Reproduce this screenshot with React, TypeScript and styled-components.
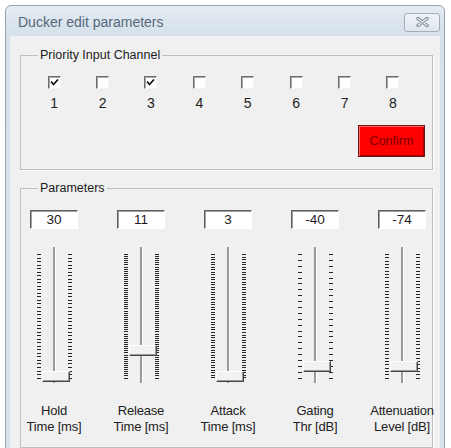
import React from 'react';
import styled, { createGlobalStyle } from 'styled-components';

const GlobalStyle = createGlobalStyle`
  body {
    margin: 0;
    background: #ffffff;
    font-family: "Liberation Sans", Arial, sans-serif;
  }
`;

const Window = styled.div`
  margin: 5px 0 0 5px;
  width: 440px;
  height: 460px;
  box-sizing: border-box;
  border: 1px solid #98a4b0;
  border-radius: 6px 6px 0 0;
  background: linear-gradient(#e4ebf3, #d5e0ea 30px, #d9e3ec);
  padding: 0 4px;
  display: flex;
  flex-direction: column;
`;

const TitleBar = styled.div`
  height: 30px;
  display: flex;
  align-items: center;
  justify-content: space-between;
  padding: 2px 0 0 8px;
  box-sizing: border-box;
`;

const Title = styled.span`
  font-size: 14px;
  color: #56677a;
`;

const CloseButton = styled.div`
  width: 36px;
  height: 19px;
  box-sizing: border-box;
  border: 1px solid #a3aeb9;
  border-radius: 3px;
  background: linear-gradient(#eff3f7, #dfe6ee);
  display: flex;
  align-items: center;
  justify-content: center;
`;

const Client = styled.div`
  flex: 1;
  background: #f0f0f0;
  padding: 12px 7px 0 10px;
`;

const Group = styled.fieldset<{ $top?: number }>`
  margin: ${(p) => p.$top ?? 0}px 0 0 0;
  padding: 0 7px 12px 9px;
  border: 1px solid #bcc0c4;
  box-shadow: 1px 1px 0 #ffffff;
  min-width: 0;
`;

const Legend = styled.legend`
  font-size: 12.5px;
  line-height: 14px;
  color: #1c1c1c;
  padding: 0 2px;
  margin-left: 8px;
`;

const ChannelRow = styled.div`
  display: grid;
  grid-template-columns: repeat(8, 48.4px);
  margin-top: 14px;
`;

const Channel = styled.div`
  display: flex;
  flex-direction: column;
  align-items: center;
`;

const CheckBox = styled.span`
  width: 13px;
  height: 13px;
  box-sizing: border-box;
  background: #ffffff;
  border: 1px solid;
  border-color: #6e6e6e #f4f4f4 #f4f4f4 #6e6e6e;
  box-shadow: inset 1px 1px 0 #a8a8a8;
  display: flex;
  align-items: center;
  justify-content: center;
`;

const ChannelNumber = styled.span`
  margin-top: 6px;
  font-size: 14px;
  line-height: 16px;
  color: #222;
`;

const ConfirmButton = styled.button`
  display: block;
  margin: 14px 0 0 auto;
  width: 67px;
  height: 32px;
  background: #ff0000;
  border: 1px solid #6e1212;
  box-shadow: inset 1px 1px 0 #ff6a6a, inset -1px -1px 0 #a80000;
  font-family: "Liberation Sans", Arial, sans-serif;
  font-size: 12.5px;
  color: #7a0000;
  padding: 0;
`;

const ParamRow = styled.div`
  display: grid;
  grid-template-columns: repeat(5, 48px);
  column-gap: 39px;
  margin-top: 15px;
`;

const Param = styled.div`
  display: flex;
  flex-direction: column;
  align-items: center;
`;

const ValueBox = styled.div`
  width: 48px;
  height: 19px;
  box-sizing: border-box;
  background: #ffffff;
  border: 1px solid;
  border-color: #5e5e5e #ffffff #ffffff #5e5e5e;
  box-shadow: inset 1px 1px 0 #a0a0a0;
  font-size: 13.5px;
  line-height: 17px;
  text-align: center;
  color: #1a1a1a;
`;

const SliderBox = styled.div`
  position: relative;
  margin-top: 18px;
  height: 136px;
  width: 48px;
  display: flex;
  justify-content: center;
  gap: 12px;
`;

const Ticks = styled.div`
  margin-top: 7px;
  height: 125px;
  width: 4px;
  display: flex;
  flex-direction: column;
  justify-content: space-between;
`;

const Tick = styled.span`
  display: block;
  width: 4px;
  height: 1px;
  background: #262626;
`;

const Track = styled.div`
  width: 2px;
  height: 136px;
  background: #9a9a9a;
  border-right: 1px solid #ffffff;
`;

const Thumb = styled.div`
  position: absolute;
  left: calc(50% - 12px);
  width: 28px;
  height: 11px;
  box-sizing: border-box;
  background: #f2f2f2;
  border: 1px solid;
  border-color: #ffffff #474747 #474747 #ffffff;
  box-shadow: inset -1px -1px 0 #9c9c9c;
`;

const ParamLabel = styled.div`
  margin-top: 20px;
  white-space: pre;
  text-align: center;
  font-size: 13px;
  letter-spacing: -0.2px;
  line-height: 16px;
  color: #222;
`;

const channels = [
  { n: 1, on: true },
  { n: 2, on: false },
  { n: 3, on: true },
  { n: 4, on: false },
  { n: 5, on: false },
  { n: 6, on: false },
  { n: 7, on: false },
  { n: 8, on: false },
];

const params = [
  { value: '30', label: 'Hold\nTime [ms]', ticks: 36, pos: 0.02 },
  { value: '11', label: 'Release\nTime [ms]', ticks: 60, pos: 0.23 },
  { value: '3', label: 'Attack\nTime [ms]', ticks: 50, pos: 0.02 },
  { value: '-40', label: 'Gating\nThr [dB]', ticks: 22, pos: 0.1 },
  { value: '-74', label: 'Attenuation\nLevel [dB]', ticks: 38, pos: 0.1 },
];

const CloseIcon = () => (
  <svg width="13" height="10" viewBox="0 0 13 10">
    <path d="M2 1.5 L11 8.5 M11 1.5 L2 8.5" stroke="#7d8893" strokeWidth="3.4" strokeLinecap="round" />
    <path d="M2 1.5 L11 8.5 M11 1.5 L2 8.5" stroke="#e9eef3" strokeWidth="1.4" strokeLinecap="round" />
  </svg>
);

const CheckMark = () => (
  <svg width="9" height="9" viewBox="0 0 9 9">
    <path d="M1 3.5 L3.5 6.5 L8 1.5" fill="none" stroke="#111" strokeWidth="1.8" />
  </svg>
);

const Slider: React.FC<{ ticks: number; pos: number }> = ({ ticks, pos }) => {
  const marks = Array.from({ length: ticks }, (_, i) => <Tick key={i} />);
  const top = 7 + (1 - pos) * 125 - 5.5;
  return (
    <SliderBox>
      <Ticks>{marks}</Ticks>
      <Track />
      <Ticks>{marks}</Ticks>
      <Thumb style={{ top }} />
    </SliderBox>
  );
};

export default function App() {
  return (
    <>
      <GlobalStyle />
      <Window>
        <TitleBar>
          <Title>Ducker edit parameters</Title>
          <CloseButton>
            <CloseIcon />
          </CloseButton>
        </TitleBar>
        <Client>
          <Group>
            <Legend>Priority Input Channel</Legend>
            <ChannelRow>
              {channels.map((c) => (
                <Channel key={c.n}>
                  <CheckBox>{c.on && <CheckMark />}</CheckBox>
                  <ChannelNumber>{c.n}</ChannelNumber>
                </Channel>
              ))}
            </ChannelRow>
            <ConfirmButton>Confirm</ConfirmButton>
          </Group>
          <Group $top={11}>
            <Legend>Parameters</Legend>
            <ParamRow>
              {params.map((p) => (
                <Param key={p.label}>
                  <ValueBox>{p.value}</ValueBox>
                  <Slider ticks={p.ticks} pos={p.pos} />
                  <ParamLabel>{p.label}</ParamLabel>
                </Param>
              ))}
            </ParamRow>
          </Group>
        </Client>
      </Window>
    </>
  );
}
